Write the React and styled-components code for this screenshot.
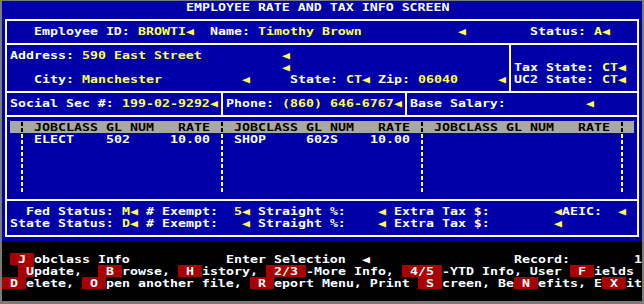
import React from 'react';
import styled, { createGlobalStyle, css } from 'styled-components';

const Global = createGlobalStyle`
  html, body { margin: 0; padding: 0; background: #7a7a7a; }
  body { padding: 1px 2px 3px; overflow: hidden; }
`;

const place = css`
  grid-row: ${(p) => p.$row + 1} / span ${(p) => p.$rows || 1};
  grid-column: ${(p) => p.$col + 1} / span ${(p) => p.$span || 1};
`;

/* 80 x 25 text-mode screen: every cell is 8px wide, 12px tall */
const Screen = styled.main`
  display: grid;
  grid-template-columns: repeat(80, 8px);
  grid-template-rows: repeat(25, 12px);
  width: 640px;
  height: 300px;
  background: #000;
  font-family: "DejaVu Sans Mono", "Liberation Mono", monospace;
  font-weight: 700;
  font-size: 13.288px;
  color: #fff;
`;

const FormPanel = styled.section`
  grid-row: 1 / 21;
  grid-column: 1 / -1;
  background: #0000a8;
`;

const Cell = styled.div`
  ${place};
  display: flex;
  align-items: flex-start;
  height: 12px;
  white-space: pre;
`;

/* text-mode glyph cells are squat; squash the run to fit the 12px row */
const Ink = styled.span`
  display: block;
  line-height: normal;
  transform: translateY(0.2px) scaleY(0.8);
  transform-origin: 0 0;
`;

const Label = styled(Cell)`
  color: #fff;
`;
const Value = styled(Cell)`
  color: #ffff55;
`;
const Pointer = styled(Cell)`
  color: ${(p) => (p.$dark ? '#fff' : '#ffff55')};
`;
const HeadText = styled(Cell)`
  color: #000;
`;
const Hotkey = styled(Cell)`
  background: #a80000;
  color: #fff;
`;
const HeadBar = styled.div`
  grid-row: 11;
  grid-column: 2 / span 78;
  background: #a8a8a8;
`;

const HRule = styled.div`
  ${place};
  align-self: start;
  height: 2px;
  margin: 6px 3px 0 3px;
  background: #fff;
`;
const VRule = styled.div`
  ${place};
  justify-self: start;
  width: 2px;
  margin: 6px 0 4px 3px;
  background: #fff;
`;
const DashRule = styled.div`
  ${place};
  justify-self: start;
  width: 2px;
  margin-left: 3px;
  background: repeating-linear-gradient(
    to bottom,
    transparent 0 1px,
    ${(p) => p.$color} 1px 5px,
    transparent 5px 6px
  );
`;

function Run({ as: Box, row, col, text, ...rest }) {
  return (
    <Box $row={row} $col={col} $span={text.length} {...rest}>
      <Ink>{text}</Ink>
    </Box>
  );
}

const ARROW = '◀';
const L = (row, col, text) => ({ kind: Label, row, col, text });
const V = (row, col, text) => ({ kind: Value, row, col, text });
const A = (row, col) => ({ kind: Pointer, row, col, text: ARROW });

const formFields = [
  L(0, 23, 'EMPLOYEE RATE AND TAX INFO SCREEN'),
  L(2, 4, 'Employee ID:'), V(2, 17, 'BROWTI'), A(2, 23),
  L(2, 26, 'Name:'), V(2, 32, 'Timothy Brown'), A(2, 57),
  L(2, 66, 'Status:'), V(2, 74, 'A'), A(2, 75),
  L(4, 1, 'Address:'), V(4, 10, '590 East Street'), A(4, 35),
  A(5, 35), L(5, 64, 'Tax State:'), V(5, 75, 'CT'), A(5, 77),
  L(6, 4, 'City:'), V(6, 10, 'Manchester'), A(6, 30),
  L(6, 36, 'State:'), V(6, 43, 'CT'), A(6, 45),
  L(6, 47, 'Zip:'), V(6, 52, '06040'), A(6, 62),
  L(6, 64, 'UC2 State:'), V(6, 75, 'CT'), A(6, 77),
  L(8, 1, 'Social Sec #:'), V(8, 15, '199-02-9292'), A(8, 26),
  L(8, 28, 'Phone:'), V(8, 35, '(860) 646-6767'), A(8, 49),
  L(8, 51, 'Base Salary:'), A(8, 73),
  L(11, 4, 'ELECT'), L(11, 13, '502'), L(11, 21, '10.00'),
  L(11, 29, 'SHOP'), L(11, 38, '602S'), L(11, 46, '10.00'),
  L(17, 3, 'Fed Status:'), V(17, 15, 'M'), A(17, 16),
  L(17, 18, '# Exempt:'), V(17, 29, '5'), A(17, 30),
  L(17, 32, 'Straight %:'), A(17, 47),
  L(17, 49, 'Extra Tax $:'), A(17, 69), L(17, 70, 'AEIC:'), A(17, 77),
  L(18, 1, 'State Status:'), V(18, 15, 'D'), A(18, 16),
  L(18, 18, '# Exempt:'), A(18, 30),
  L(18, 32, 'Straight %:'), A(18, 47),
  L(18, 49, 'Extra Tax $:'), A(18, 69),
];

const hRules = [1, 3, 7, 9, 16, 19];
const vRules = [
  { col: 0, from: 1, to: 19 },
  { col: 79, from: 1, to: 19 },
  { col: 63, from: 3, to: 7 },
  { col: 27, from: 7, to: 9 },
  { col: 50, from: 7, to: 9 },
];
const dashCols = [2, 27, 52, 77];
const tableStarts = [2, 27, 52];

const K = (row, col, text) => ({ kind: Hotkey, row, col, text });
const P = (row, col, text) => ({ kind: Label, row, col, text });

const menu = [
  K(21, 1, ' J '), P(21, 4, 'obclass Info'), P(21, 28, 'Enter Selection'),
  P(21, 64, 'Record:'), P(21, 79, '1'),
  K(22, 2, ' U'), P(22, 4, 'pdate,'), K(22, 12, ' B '), P(22, 15, 'rowse,'),
  K(22, 22, ' H '), P(22, 25, 'istory,'), K(22, 33, ' 2/3 '), P(22, 38, '-More Info,'),
  K(22, 50, ' 4/5 '), P(22, 55, '-YTD Info, User'), K(22, 71, ' F '), P(22, 74, 'ields'),
  K(23, 0, ' D '), P(23, 3, 'elete,'), K(23, 10, ' O '), P(23, 13, 'pen another file,'),
  K(23, 31, ' R '), P(23, 34, 'eport Menu, Print'), K(23, 52, ' S '), P(23, 55, 'creen, Be'),
  K(23, 64, ' N '), P(23, 67, 'efits, E'), K(23, 75, ' X '), P(23, 78, 'it'),
];

export default function App() {
  return (
    <>
      <Global />
      <Screen>
        <FormPanel />
        {hRules.map((r) => (
          <HRule key={`h${r}`} $row={r} $col={0} $span={80} />
        ))}
        {vRules.map((v) => (
          <VRule key={`v${v.col}`} $row={v.from} $rows={v.to - v.from + 1} $col={v.col} />
        ))}
        <HeadBar />
        {tableStarts.map((s) => (
          <React.Fragment key={`t${s}`}>
            <Run as={HeadText} row={10} col={s + 2} text="JOBCLASS" />
            <Run as={HeadText} row={10} col={s + 11} text="GL NUM" />
            <Run as={HeadText} row={10} col={s + 20} text="RATE" />
          </React.Fragment>
        ))}
        {dashCols.map((c) => (
          <React.Fragment key={`d${c}`}>
            <DashRule $row={10} $col={c} $color="#000" />
            <DashRule $row={11} $rows={5} $col={c} $color="#fff" />
          </React.Fragment>
        ))}
        {formFields.map((f, i) => (
          <Run key={`f${i}`} as={f.kind} row={f.row} col={f.col} text={f.text} />
        ))}
        {menu.map((m, i) => (
          <Run key={`m${i}`} as={m.kind} row={m.row} col={m.col} text={m.text} />
        ))}
        <Run as={Pointer} $dark row={21} col={45} text={ARROW} />
      </Screen>
    </>
  );
}
